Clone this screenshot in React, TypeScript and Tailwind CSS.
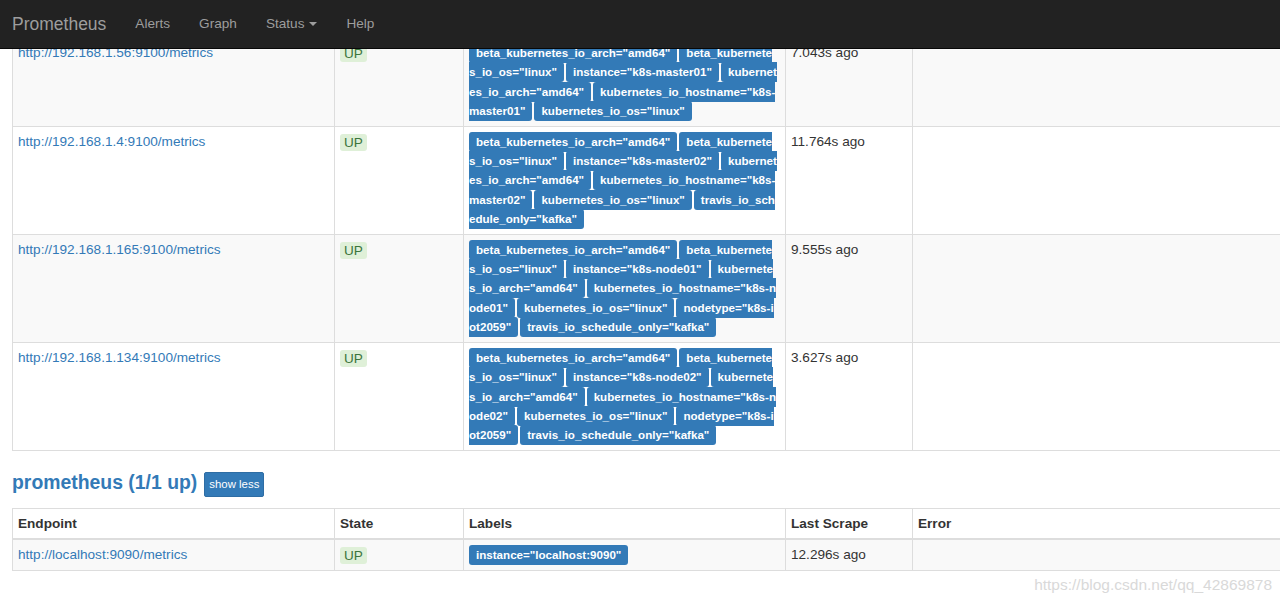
import React, { Fragment } from "react";

type Row = { endpoint: string; labels: string[]; scrape: string };

const rows: Row[] = [
  {
    endpoint: "http://192.168.1.56:9100/metrics",
    labels: [
      'beta_kubernetes_io_arch="amd64"',
      'beta_kubernetes_io_os="linux"',
      'instance="k8s-master01"',
      'kubernetes_io_arch="amd64"',
      'kubernetes_io_hostname="k8s-master01"',
      'kubernetes_io_os="linux"',
    ],
    scrape: "7.043s ago",
  },
  {
    endpoint: "http://192.168.1.4:9100/metrics",
    labels: [
      'beta_kubernetes_io_arch="amd64"',
      'beta_kubernetes_io_os="linux"',
      'instance="k8s-master02"',
      'kubernetes_io_arch="amd64"',
      'kubernetes_io_hostname="k8s-master02"',
      'kubernetes_io_os="linux"',
      'travis_io_schedule_only="kafka"',
    ],
    scrape: "11.764s ago",
  },
  {
    endpoint: "http://192.168.1.165:9100/metrics",
    labels: [
      'beta_kubernetes_io_arch="amd64"',
      'beta_kubernetes_io_os="linux"',
      'instance="k8s-node01"',
      'kubernetes_io_arch="amd64"',
      'kubernetes_io_hostname="k8s-node01"',
      'kubernetes_io_os="linux"',
      'nodetype="k8s-iot2059"',
      'travis_io_schedule_only="kafka"',
    ],
    scrape: "9.555s ago",
  },
  {
    endpoint: "http://192.168.1.134:9100/metrics",
    labels: [
      'beta_kubernetes_io_arch="amd64"',
      'beta_kubernetes_io_os="linux"',
      'instance="k8s-node02"',
      'kubernetes_io_arch="amd64"',
      'kubernetes_io_hostname="k8s-node02"',
      'kubernetes_io_os="linux"',
      'nodetype="k8s-iot2059"',
      'travis_io_schedule_only="kafka"',
    ],
    scrape: "3.627s ago",
  },
];

function Label({ text }: { text: string }) {
  return (
    <span className="bg-[#337ab7] text-white font-bold text-[11.6px] leading-none px-[7px] pt-[3px] pb-[4px] rounded-[3px]">
      {text}
    </span>
  );
}

function Labels({ labels }: { labels: string[] }) {
  return (
    <>
      {labels.map((l, i) => (
        <Fragment key={i}>
          {i > 0 && " "}
          <Label text={l} />
        </Fragment>
      ))}
    </>
  );
}

function Up() {
  return (
    <span className="inline-block align-top mt-[2px] h-[17px] leading-[17px] px-[4px] rounded-[3px] bg-[#dff0d8] text-[#3c763d]">
      UP
    </span>
  );
}

const td = "border border-[#ddd] px-[5px] py-[5px] align-top leading-[19.4px]";
const labelTd =
  "border border-[#ddd] pl-[5px] pr-[7.2px] py-[5px] align-top leading-[19.4px] break-all [word-spacing:-1.78px]";
const th = "border border-[#ddd] border-b-2 px-[5px] py-[5px] align-top leading-[19.4px] text-left font-bold";

function Cols() {
  return (
    <colgroup>
      <col className="w-[322px]" />
      <col className="w-[129px]" />
      <col className="w-[322px]" />
      <col className="w-[127px]" />
      <col />
    </colgroup>
  );
}

export default function App() {
  return (
    <div
      className="relative w-[1280px] h-[602px] overflow-hidden bg-white text-[#333] text-[13.6px]"
      style={{ fontFamily: '"Liberation Sans", Arial, sans-serif' }}
    >
      <nav className="absolute top-0 left-0 right-0 z-10 h-[49px] bg-[#222] border-b border-[#080808] flex items-center text-[#9d9d9d]">
        <span className="pl-[12px] pr-[14.5px] text-[17.5px] leading-[20px]">Prometheus</span>
        <span className="px-[14.5px] leading-[20px]">Alerts</span>
        <span className="px-[14.5px] leading-[20px]">Graph</span>
        <span className="px-[14.5px] leading-[20px] flex items-center">
          Status
          <span className="inline-block ml-[5px] w-0 h-0 border-t-[4px] border-x-[4px] border-x-transparent border-t-[#9d9d9d]" />
        </span>
        <span className="px-[14.5px] leading-[20px]">Help</span>
      </nav>

      <div className="pt-[37px] pl-[12px]">
        <table className="table-fixed border-collapse w-[1276px]">
          <Cols />
          <tbody>
            {rows.map((r, i) => (
              <tr key={i} className={i % 2 === 0 ? "bg-[#f9f9f9]" : "bg-white"}>
                <td className={td}>
                  <span className="text-[#337ab7]">{r.endpoint}</span>
                </td>
                <td className={td}>
                  <Up />
                </td>
                <td className={labelTd}>
                  <Labels labels={r.labels} />
                </td>
                <td className={td}>{r.scrape}</td>
                <td className={td}></td>
              </tr>
            ))}
          </tbody>
        </table>

        <div className="flex items-center mt-[21px] mb-[11px]">
          <h2 className="text-[19.4px] font-bold text-[#337ab7] leading-[25px] -mt-[4px]">
            prometheus (1/1 up)
          </h2>
          <button className="ml-[7px] h-[25px] px-[4px] bg-[#337ab7] border border-[#2e6da4] text-white text-[11.4px] leading-[23px] rounded-[2px]">
            show less
          </button>
        </div>

        <table className="table-fixed border-collapse w-[1276px]">
          <Cols />
          <thead>
            <tr className="bg-white">
              <th className={th}>Endpoint</th>
              <th className={th}>State</th>
              <th className={th}>Labels</th>
              <th className={th}>Last Scrape</th>
              <th className={th}>Error</th>
            </tr>
          </thead>
          <tbody>
            <tr className="bg-[#f9f9f9]">
              <td className={td}>
                <span className="text-[#337ab7]">http://localhost:9090/metrics</span>
              </td>
              <td className={td}>
                <Up />
              </td>
              <td className={labelTd}>
                <Label text={'instance="localhost:9090"'} />
              </td>
              <td className={td}>12.296s ago</td>
              <td className={td}></td>
            </tr>
          </tbody>
        </table>

        <div className="text-right pr-[8px] mt-[4px] text-[15.5px] leading-[20px] text-[#d9d9d9]">
          https://blog.csdn.net/qq_42869878
        </div>
      </div>
    </div>
  );
}
